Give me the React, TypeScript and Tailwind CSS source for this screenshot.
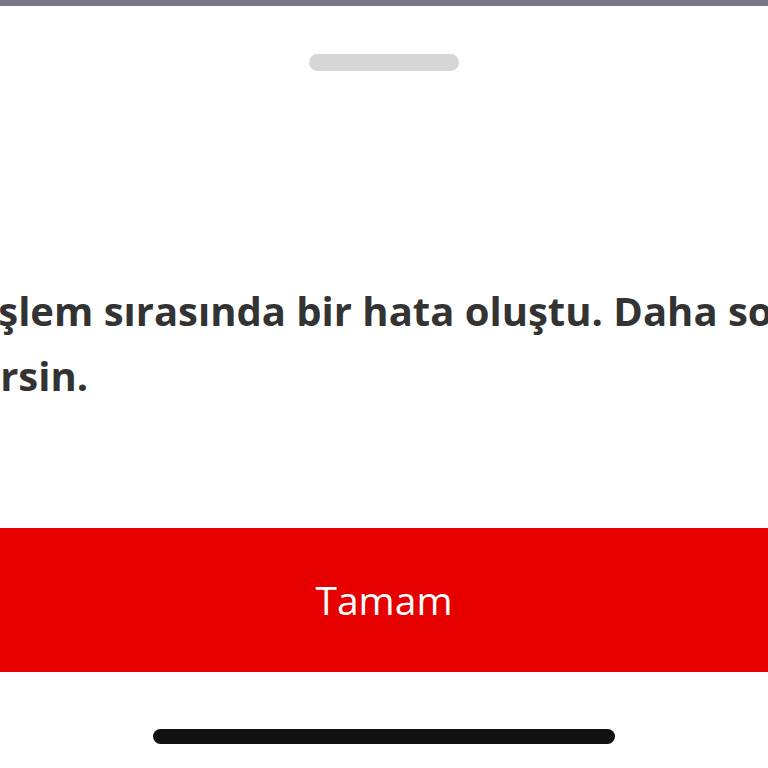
const FONT = "font-['Open_Sans',_'Noto_Sans',_sans-serif]"

export default function App() {
  return (
    <div className={`flex h-[768px] w-[768px] flex-col overflow-hidden bg-white ${FONT}`}>
      <div className="h-[6px] w-full bg-[#7b7685]" />

      <div className="flex justify-center pt-[48px]">
        <div className="h-[17px] w-[150px] rounded-full bg-[#d6d6d6]" />
      </div>

      <div className="mt-[207px] overflow-hidden text-[40px] font-bold leading-[65px] text-[#333333]">
        <p className="-ml-[15px] whitespace-nowrap">İşlem sırasında bir hata oluştu. Daha sonra</p>
        <p className="-ml-[12px] whitespace-nowrap">irsin.</p>
      </div>

      <button
        type="button"
        className="mt-[120px] flex h-[144px] w-full items-center justify-center bg-[#e60000] text-[39px] text-white"
      >
        Tamam
      </button>

      <div className="flex justify-center pt-[57px]">
        <div className="h-[15px] w-[462px] rounded-full bg-[#111111]" />
      </div>
    </div>
  )
}
